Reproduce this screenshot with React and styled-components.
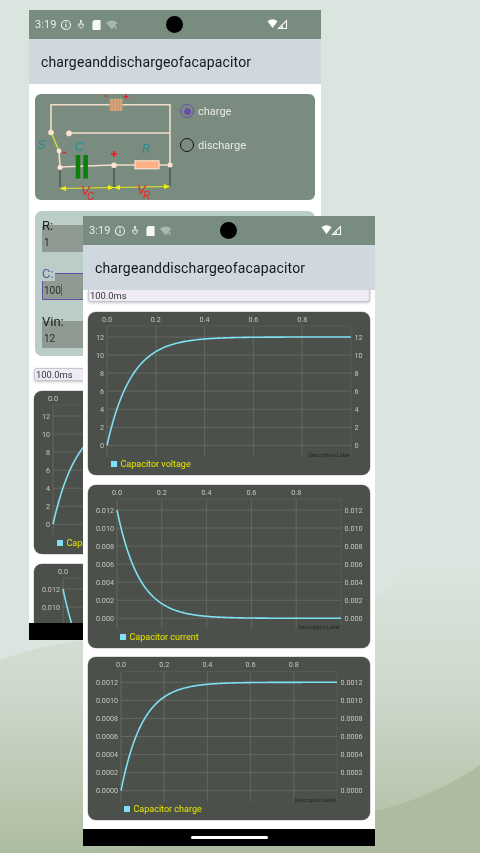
import React from "react";
import styled, { createGlobalStyle } from "styled-components";

const Global = createGlobalStyle`
  html, body { margin: 0; padding: 0; background: #dbe5e0; }
  body { font-family: Roboto, "Liberation Sans", sans-serif; }
`;

const Desktop = styled.div`
  position: relative;
  width: 480px;
  height: 853px;
  overflow: hidden;
  background: #dbe5e0;
`;

const Backdrop = styled.svg`
  position: absolute;
  inset: 0;
  width: 480px;
  height: 853px;
`;

const Phone = styled.div`
  position: absolute;
  left: ${(p) => p.$x}px;
  top: ${(p) => p.$y}px;
  width: 292px;
  height: 630px;
  display: flex;
  flex-direction: column;
  background: #fff;
  overflow: hidden;
  filter: blur(0.3px);
`;

const StatusBar = styled.div`
  position: relative;
  flex: 0 0 29px;
  display: flex;
  align-items: center;
  background: #788c80;
  padding-left: 6px;
  color: #e8eee9;
  font-size: 11px;
`;

const Clock = styled.span`
  width: 26px;
  letter-spacing: 0.1px;
`;

const StatusIcons = styled.svg`
  display: block;
`;

const Camera = styled.div`
  position: absolute;
  left: 137px;
  top: 6px;
  width: 17px;
  height: 17px;
  border-radius: 50%;
  background: #000;
`;

const SignalIcons = styled.svg`
  position: absolute;
  left: 238px;
  top: 8px;
`;

const AppBar = styled.div`
  flex: 0 0 45px;
  display: flex;
  align-items: center;
  padding-left: 12px;
  background: #d0d8df;
  color: #14181a;
  font-size: 14px;
  letter-spacing: 0.15px;
`;

const Content = styled.div`
  flex: 1 1 0;
  min-height: 0;
  overflow: hidden;
  display: flex;
  flex-direction: column;
  padding: ${(p) => (p.$scrolled ? "0" : "10px")} 5px 0;
  background: #fff;
`;

const CircuitPanel = styled.div`
  flex: 0 0 106px;
  margin: 0 1px 11px;
  display: flex;
  background: #7a8c80;
  border-radius: 6px;
  overflow: hidden;
`;

const CircuitDrawing = styled.svg`
  flex: 0 0 140px;
  display: block;
`;

const RadioGroup = styled.div`
  display: flex;
  flex-direction: column;
  gap: 20px;
  padding: 10px 0 0 5px;
`;

const RadioRow = styled.label`
  display: flex;
  align-items: center;
  gap: 4px;
  height: 14px;
  color: #e6e9e6;
  font-size: 11px;
`;

const RadioMark = styled.span`
  box-sizing: border-box;
  width: 14px;
  height: 14px;
  border-radius: 50%;
  border: 1.6px solid ${(p) => (p.$on ? "#6750a4" : "#101412")};
  display: flex;
  align-items: center;
  justify-content: center;
  &::after {
    content: "";
    width: 7px;
    height: 7px;
    border-radius: 50%;
    background: ${(p) => (p.$on ? "#6750a4" : "transparent")};
  }
`;

const FormPanel = styled.div`
  flex: 0 0 145px;
  box-sizing: border-box;
  margin: 0 1px 12px;
  padding: 8px 7px;
  display: flex;
  flex-direction: column;
  gap: 15px;
  background: #bacdc6;
  border-radius: 7px;
`;

const Field = styled.div`
  display: flex;
  flex-direction: column;
`;

const FieldLabel = styled.span`
  position: relative;
  z-index: 1;
  align-self: flex-start;
  margin-bottom: -8px;
  padding-right: 1px;
  font-size: 13px;
  line-height: 14px;
  color: ${(p) => (p.$focus ? "#6750a4" : "#1b1f1d")};
  background: ${(p) => (p.$focus ? "#bacdc6" : "transparent")};
`;

const FieldBox = styled.div`
  box-sizing: border-box;
  height: 27px;
  padding: 7px 0 0 ${(p) => (p.$focus ? "1px" : "2px")};
  display: flex;
  align-items: center;
  font-size: 10px;
  color: #27302c;
  background: #8e9a92;
  border-radius: 2px 2px 0 0;
  border: ${(p) => (p.$focus ? "1.5px solid #6750a4" : "0")};
`;

const Caret = styled.span`
  width: 1px;
  height: 12px;
  background: #6750a4;
`;

const TimeBox = styled.div`
  flex: 0 0 ${(p) => (p.$scrolled ? "12px" : "13px")};
  box-sizing: border-box;
  margin-bottom: 10px;
  display: flex;
  align-items: center;
  padding-left: 1px;
  font-size: 9.4px;
  color: #333538;
  background: #efebf5;
  border: 1px solid #c8c4d2;
  border-top-width: ${(p) => (p.$scrolled ? "0" : "1px")};
  border-radius: ${(p) => (p.$scrolled ? "0 0 3px 3px" : "3px")};
  box-shadow: 0 1px 3px rgba(60, 60, 70, 0.3);
`;

const ChartCard = styled.div`
  flex: 0 0 163px;
  box-sizing: border-box;
  margin-bottom: ${(p) => (p.$last ? 0 : 9.5)}px;
  display: flex;
  flex-direction: column;
  background: #4c504b;
  border-radius: 8px;
  box-shadow: 0 0 0 0.5px #bcbcc0;
  overflow: hidden;
`;

const ChartPlot = styled.svg`
  display: block;
  flex: 0 0 146px;
`;

const Legend = styled.div`
  display: flex;
  align-items: center;
  gap: 3.5px;
  padding-left: ${(p) => p.$indent}px;
  color: #e6e600;
  font-size: 9px;
  line-height: 12px;
`;

const Swatch = styled.span`
  width: 6px;
  height: 6px;
  background: #80e0f4;
`;

const NavBar = styled.div`
  flex: 0 0 17px;
  display: flex;
  align-items: center;
  justify-content: center;
  background: #000;
`;

const HomePill = styled.span`
  width: 77px;
  height: 3px;
  border-radius: 2px;
  background: #fff;
`;

function StatusRow() {
  return (
    <StatusBar>
      <Clock>3:19</Clock>
      <StatusIcons width="90" height="16" viewBox="0 0 90 16">
        <circle cx="5" cy="8" r="4.5" fill="none" stroke="#eef2ef" strokeWidth="1.1" />
        <rect x="4.4" y="7" width="1.2" height="3.5" fill="#eef2ef" />
        <rect x="4.4" y="5" width="1.2" height="1.2" fill="#eef2ef" />
        <path d="M20 3.5v3M17.6 7h4.8l-.4 2.4-2 2-2-2z" fill="none" stroke="#eef2ef" strokeWidth="1" />
        <circle cx="20" cy="4.2" r="1.1" fill="#eef2ef" />
        <path d="M33 3h5.8a.8.8 0 0 1 .8.8v8.4a.8.8 0 0 1-.8.8h-6.6a.8.8 0 0 1-.8-.8V5z" fill="#f6f8f6" />
        <path d="M45 5.8a9.5 9.5 0 0 1 11.5 0l-5.7 6.6z" fill="#a8b8ae" />
        <text x="53" y="12.5" fontSize="5.5" fill="#d6ded8" fontFamily="Roboto, sans-serif">?</text>
      </StatusIcons>
      <Camera />
      <SignalIcons width="30" height="13" viewBox="0 0 30 13">
        <path d="M0.5 3.2a8.2 8.2 0 0 1 10 0L5.5 10z" fill="#fff" />
        <path d="M19.5 2.5v8h-8z" fill="none" stroke="#fff" strokeWidth="1.1" />
        <path d="M16 7.5v3h-3z" fill="#fff" />
      </SignalIcons>
    </StatusBar>
  );
}

function Circuit() {
  const wire = "#f3dcc8";
  const labelFont = "Liberation Sans, sans-serif";
  return (
    <CircuitDrawing width="140" height="106" viewBox="36 94 140 106">
      <path d="M52 132V104.7H171V165" fill="none" stroke={wire} strokeWidth="1.6" />
      <path d="M70 133H171" fill="none" stroke={wire} strokeWidth="1.6" />
      <path d="M60 151L61 167L115 165H171" fill="none" stroke={wire} strokeWidth="1.6" />
      <path d="M52 132L60 151" stroke="#e8e820" strokeWidth="1.2" />
      <rect x="110.5" y="99" width="13" height="12" fill="#c8966a" />
      <path d="M113 98.5v12.5M116 98.5v12.5M119 98.5v12.5M122 98.5v12.5" stroke="#e2b48c" strokeWidth="0.9" />
      <path d="M105.5 96h3.5M124.5 96.5h5M127 94v5" stroke="#f01818" strokeWidth="1.2" />
      <rect x="76.7" y="155" width="4.6" height="23.5" fill="#0a800a" />
      <rect x="84.3" y="155" width="4.6" height="23.5" fill="#0a800a" />
      <rect x="136" y="160.8" width="24" height="8" fill="#ffb084" stroke="#f7e2d2" strokeWidth="1.2" />
      <path d="M63.5 152.5h3.5M112 154h6M115 151v6" stroke="#f01818" strokeWidth="1.6" />
      <path d="M61 167V187M115 165V188M171 165V187" stroke="#3c4c46" strokeWidth="1.2" />
      <path d="M61 188.5L115 187.5L171 186.5" stroke="#e8e820" strokeWidth="1.1" fill="none" />
      <path d="M61 188.5l6-2.5v5zM115 187.5l-6-2.5v5zM115 187.5l6-2.5v5zM171 186.5l-6-2.5v5z" fill="#f0f010" />
      <circle cx="52" cy="132.5" r="2.8" fill="#fbe3d2" />
      <circle cx="70" cy="133.4" r="2.8" fill="#fbe3d2" />
      <circle cx="60" cy="151" r="2.4" fill="#fbe3d2" />
      <circle cx="61" cy="167.5" r="2.5" fill="#fbe3d2" />
      <circle cx="115" cy="165.2" r="2.8" fill="#fbe3d2" />
      <circle cx="171" cy="165" r="2.5" fill="#fbe3d2" />
      <g fontFamily={labelFont} fontStyle="italic" fontSize="12">
        <text x="38.5" y="149" fill="#1f8f90">S</text>
        <text x="76" y="151" fill="#1f8f90">C</text>
        <text x="143" y="153" fill="#1f8f90">R</text>
        <text x="82" y="195" fill="#f02020" fontSize="13">V</text>
        <text x="88" y="200" fill="#f02020" fontSize="10">C</text>
        <text x="138" y="194" fill="#f02020" fontSize="13">V</text>
        <text x="144" y="199" fill="#f02020" fontSize="10">R</text>
      </g>
    </CircuitDrawing>
  );
}

function Chart({ spec, last }) {
  const { left, right, top, bottom, y0, yMax, ticks, fn, peak, legend, indent } = spec;
  const xScale = (t) => left + t * (right - left);
  const yScale = (v) => y0 - (v / peak) * (y0 - yMax);
  const pts = [];
  for (let i = 0; i <= 200; i++) {
    const t = i / 200;
    pts.push(`${xScale(t).toFixed(2)},${yScale(fn(t)).toFixed(2)}`);
  }
  const xTicks = [0, 0.2, 0.4, 0.6, 0.8];
  const n = ticks.length - 1;
  return (
    <ChartCard $last={last}>
      <ChartPlot width="282" height="146" viewBox="0 0 282 146">
        <g stroke="#686d67" strokeWidth="0.8">
          <line x1={left} x2={right} y1={top} y2={top} opacity="0.5" />
          <line x1={right} x2={right} y1={top} y2={bottom} opacity="0.5" />
          {xTicks.map((t) => (
            <line key={t} x1={xScale(t)} x2={xScale(t)} y1={top} y2={bottom} />
          ))}
          {ticks.map((_, i) => {
            const y = y0 - (i / n) * (y0 - yMax);
            return <line key={i} x1={left} x2={right} y1={y} y2={y} />;
          })}
        </g>
        <polyline points={pts.join(" ")} fill="none" stroke="#7fdff3" strokeWidth="1.6" />
        <g fontFamily="Roboto, sans-serif" fontSize="7.2" fill="#c6c8c4">
          {xTicks.map((t) => (
            <text key={t} x={xScale(t)} y="9.5" textAnchor="middle">
              {t.toFixed(1)}
            </text>
          ))}
          {ticks.map((label, i) => {
            const y = y0 - (i / n) * (y0 - yMax) + 2.6;
            return (
              <React.Fragment key={label}>
                <text x={left - 3} y={y} textAnchor="end">{label}</text>
                <text x={right + 3.5} y={y}>{label}</text>
              </React.Fragment>
            );
          })}
        </g>
        <text x={right - 1} y={bottom} textAnchor="end" fontFamily="Roboto, sans-serif" fontSize="5.4" fill="#24261f">
          Description Label
        </text>
      </ChartPlot>
      <Legend $indent={indent}>
        <Swatch />
        {legend}
      </Legend>
    </ChartCard>
  );
}

const tau = 0.1;
const charts = [
  {
    left: 19, right: 263, top: 14, bottom: 144.7, y0: 133.3, yMax: 25, indent: 23, peak: 12,
    ticks: ["0", "2", "4", "6", "8", "10", "12"],
    fn: (t) => 12 * (1 - Math.exp(-t / tau)),
    legend: "Capacitor voltage",
  },
  {
    left: 29, right: 253, top: 14, bottom: 143.7, y0: 133.3, yMax: 25, indent: 32, peak: 0.012,
    ticks: ["0.000", "0.002", "0.004", "0.006", "0.008", "0.010", "0.012"],
    fn: (t) => 0.012 * Math.exp(-t / tau),
    legend: "Capacitor current",
  },
  {
    left: 33, right: 249, top: 14.7, bottom: 145, y0: 133.7, yMax: 25.3, indent: 36, peak: 0.0012,
    ticks: ["0.0000", "0.0002", "0.0004", "0.0006", "0.0008", "0.0010", "0.0012"],
    fn: (t) => 0.0012 * (1 - Math.exp(-t / tau)),
    legend: "Capacitor charge",
  },
];

const fields = [
  { label: "R:", value: "1" },
  { label: "C:", value: "100", focus: true },
  { label: "Vin:", value: "12" },
];

export default function App() {
  return (
    <Desktop>
      <Global />
      <Backdrop viewBox="0 0 480 853">
        <defs>
          <linearGradient id="hill" x1="0" y1="0" x2="0" y2="1">
            <stop offset="0" stopColor="#dbe4dd" />
            <stop offset="0.45" stopColor="#cdd7ca" />
            <stop offset="1" stopColor="#adbda0" />
          </linearGradient>
        </defs>
        <path d="M0 660C60 637 150 632 250 628C320 622 370 612 403 575C430 572 460 573 480 573V853H0Z" fill="url(#hill)" />
        <path d="M480 765C440 792 405 804 375 811C280 830 160 845 80 853H480Z" fill="#adbca0" />
      </Backdrop>

      <Phone $x={29} $y={10}>
        <StatusRow />
        <AppBar>chargeanddischargeofacapacitor</AppBar>
        <Content>
          <CircuitPanel>
            <Circuit />
            <RadioGroup>
              <RadioRow><RadioMark $on />charge</RadioRow>
              <RadioRow><RadioMark />discharge</RadioRow>
            </RadioGroup>
          </CircuitPanel>
          <FormPanel>
            {fields.map((f) => (
              <Field key={f.label}>
                <FieldLabel $focus={f.focus}>{f.label}</FieldLabel>
                <FieldBox $focus={f.focus}>
                  {f.value}
                  {f.focus && <Caret />}
                </FieldBox>
              </Field>
            ))}
          </FormPanel>
          <TimeBox>100.0ms</TimeBox>
          <Chart spec={charts[0]} />
          <Chart spec={charts[1]} last />
        </Content>
        <NavBar />
      </Phone>

      <Phone $x={83} $y={216}>
        <StatusRow />
        <AppBar>chargeanddischargeofacapacitor</AppBar>
        <Content $scrolled>
          <TimeBox $scrolled>100.0ms</TimeBox>
          {charts.map((c, i) => (
            <Chart key={c.legend} spec={c} last={i === 2} />
          ))}
        </Content>
        <NavBar><HomePill /></NavBar>
      </Phone>
    </Desktop>
  );
}
